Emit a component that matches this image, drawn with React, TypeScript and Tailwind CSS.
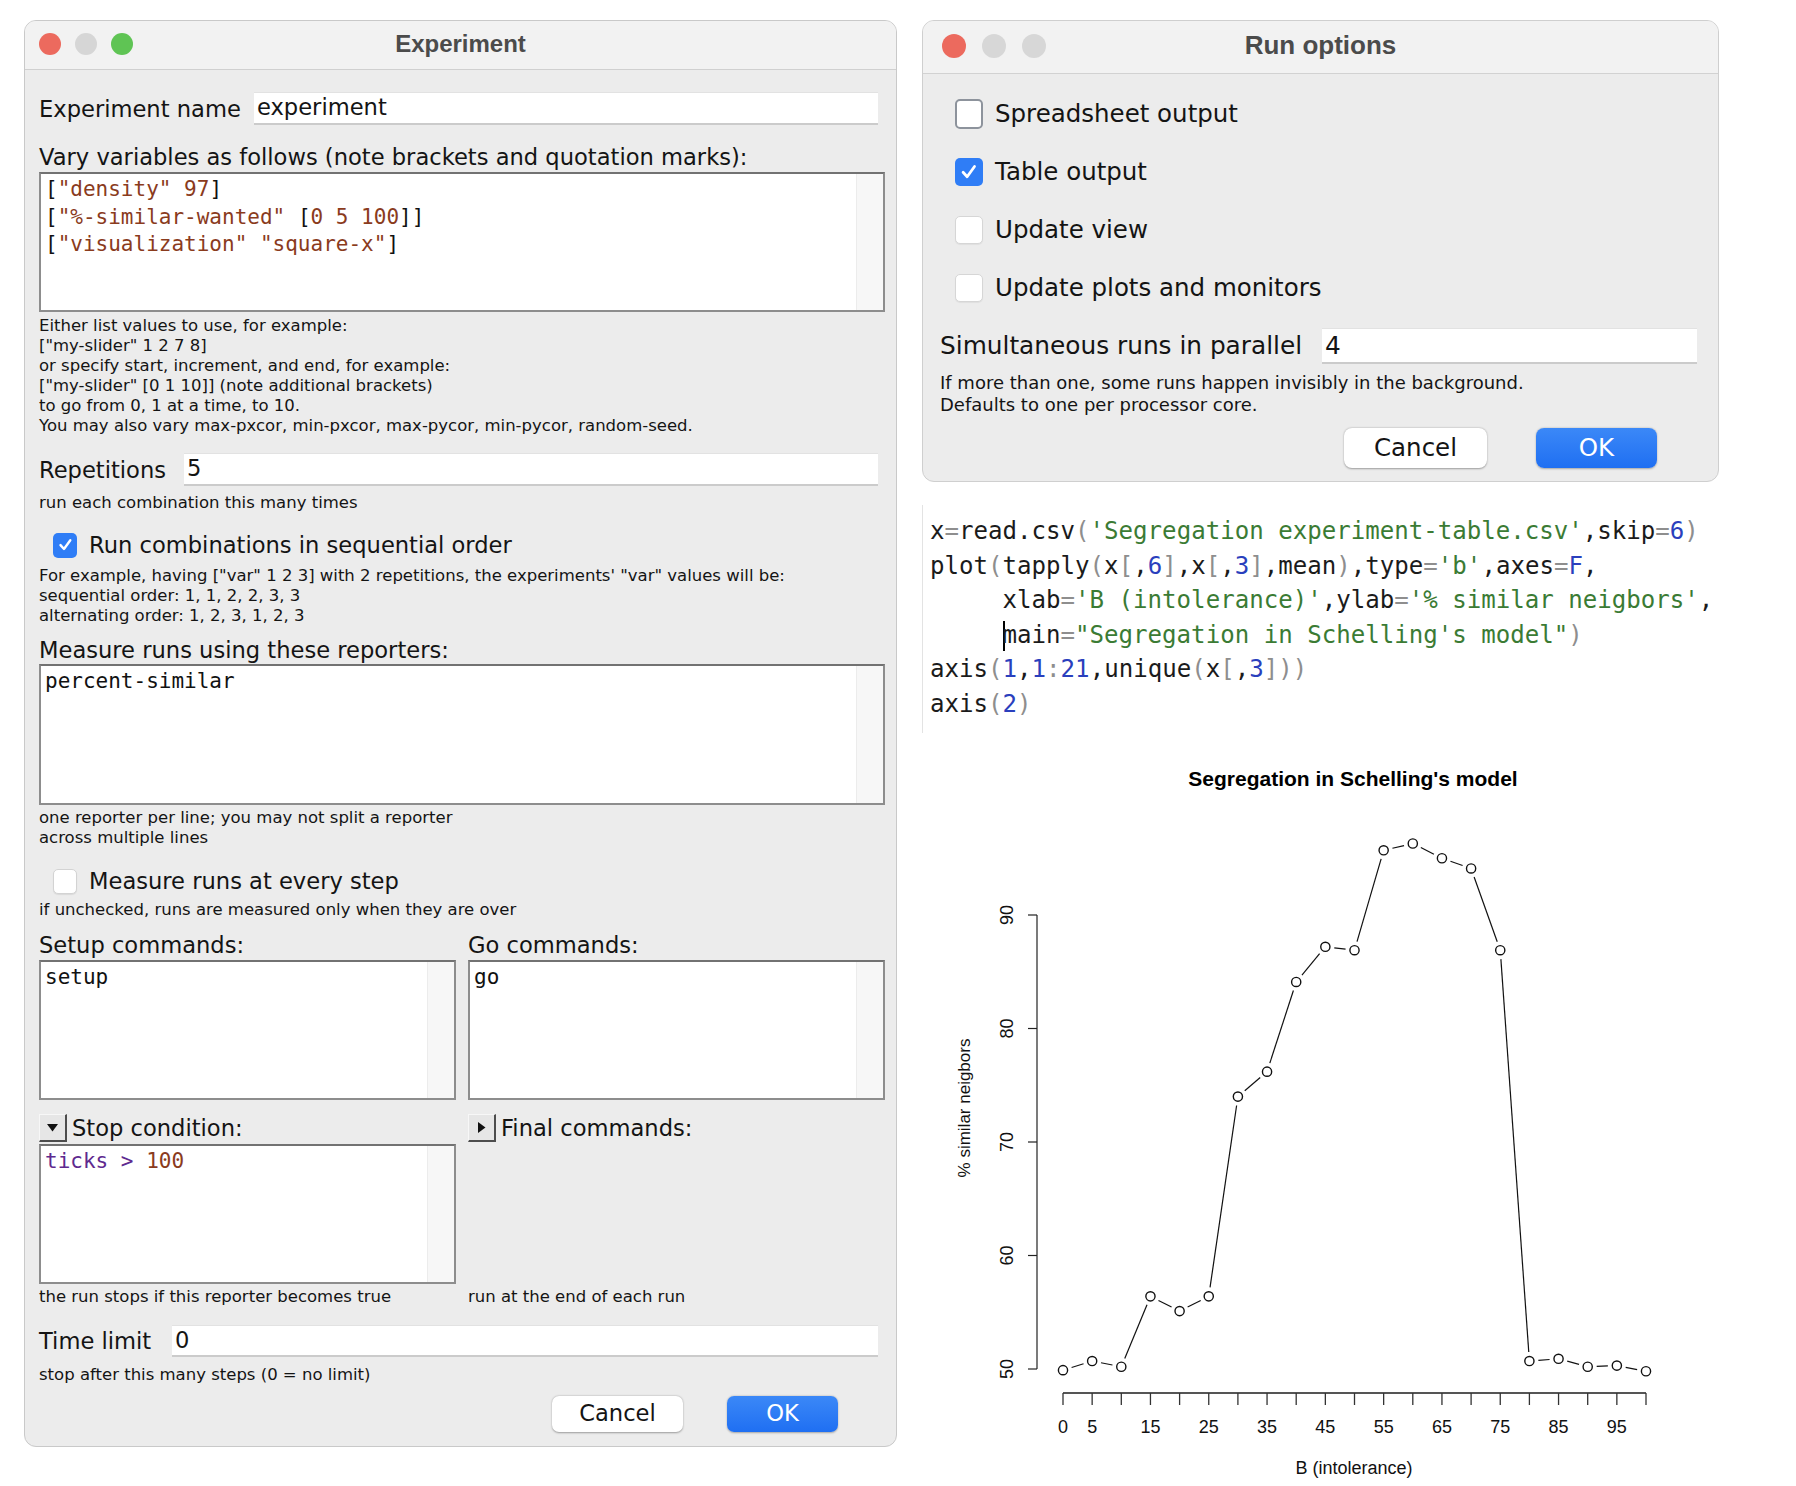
import React from "react";

const SANS = "font-['DejaVu_Sans',sans-serif]";
const MONO = "font-['DejaVu_Sans_Mono',monospace]";
const ARIAL = "font-['Liberation_Sans',Arial,sans-serif]";

function Light({ color, cls }: { color: string; cls: string }) {
  return <div className={"rounded-full " + cls} style={{ backgroundColor: color }} />;
}

function Check({ cls }: { cls: string }) {
  return (
    <div className={"rounded-[5px] bg-[#2f7df6] flex items-center justify-center shrink-0 " + cls}>
      <svg viewBox="0 0 24 24" className="w-[70%] h-[70%]">
        <path d="M5 12.5 L10 18 L19 5.5" fill="none" stroke="white" strokeWidth="3.4" strokeLinecap="round" strokeLinejoin="round" />
      </svg>
    </div>
  );
}

function Uncheck({ cls }: { cls: string }) {
  return <div className={"rounded-[5px] bg-white shrink-0 " + cls} />;
}

function Field({ value, cls, textCls }: { value: string; cls: string; textCls: string }) {
  return (
    <div className={"bg-white border-t border-t-[#e2e2e2] border-b-2 border-b-[#cbcbcb] flex items-center pl-[3px] " + cls}>
      <span className={textCls}>{value}</span>
    </div>
  );
}

function CodeBox({ cls, children }: { cls: string; children?: React.ReactNode }) {
  return (
    <div className={"flex bg-white border-2 border-[#8d8d8d] border-t-[#727272] " + cls}>
      <div className={"flex-1 pl-[4px] pt-[2px] text-[21px] leading-[27.5px] whitespace-pre text-[#111] " + MONO}>{children}</div>
      <div className="w-[27px] bg-[#f7f7f7] border-l border-[#ececec]" />
    </div>
  );
}

function Tri({ dir }: { dir: "down" | "right" }) {
  return (
    <div className="w-[28px] h-[28px] shrink-0 bg-[#e6e6e6] border-t border-l border-[#f7f7f7] border-r-2 border-r-[#4d4d4d] border-b-2 border-b-[#4d4d4d] flex items-center justify-center">
      {dir === "down" ? (
        <svg width="11" height="8" viewBox="0 0 11 8"><path d="M0 0 L11 0 L5.5 7.5 Z" fill="#111" /></svg>
      ) : (
        <svg width="8" height="11" viewBox="0 0 8 11"><path d="M0 0 L7.5 5.5 L0 11 Z" fill="#111" /></svg>
      )}
    </div>
  );
}

const B = "text-[#8a3b1d]";
const K = "text-[#111]";
const LBL = "text-[22.6px] leading-[26px]";
const SM = "text-[16.5px] leading-[20px]";

function ExperimentWindow() {
  return (
    <div className={"w-[873px] h-[1427px] shrink-0 rounded-[12px] bg-[#ececec] border border-[#c9c9c9] overflow-hidden flex flex-col text-[#141414] " + SANS}>
      <div className="h-[49px] shrink-0 pb-[3px] bg-[#f2f2f2] border-b border-[#d0d0d0] grid grid-cols-[1fr_auto_1fr] items-center">
        <div className="flex items-center gap-[14px] pl-[14px]">
          <Light color="#ec6a5e" cls="w-[22px] h-[22px]" />
          <Light color="#d6d6d6" cls="w-[22px] h-[22px]" />
          <Light color="#5fc454" cls="w-[22px] h-[22px]" />
        </div>
        <span className={"text-[24px] font-bold text-[#4b4b4b] " + ARIAL}>Experiment</span>
        <div />
      </div>

      <div className="flex flex-col pl-[14px] pr-[11px]">
        <div className="mt-[22px] flex items-center h-[33px]">
          <span className={"w-[215px] shrink-0 " + LBL}>Experiment name</span>
          <Field value="experiment" cls="flex-1 h-[33px] mr-[7px]" textCls="text-[22.6px]" />
        </div>

        <div className={"mt-[19px] " + LBL}>Vary variables as follows (note brackets and quotation marks):</div>
        <CodeBox cls="mt-[2px] h-[140px]">
          <div>
            <span className={K}>[</span><span className={B}>"density" 97</span><span className={K}>]</span>
          </div>
          <div>
            <span className={K}>[</span><span className={B}>"%-similar-wanted" </span><span className={K}>[</span><span className={B}>0 5 100</span><span className={K}>]]</span>
          </div>
          <div>
            <span className={K}>[</span><span className={B}>"visualization" "square-x"</span><span className={K}>]</span>
          </div>
        </CodeBox>

        <div className={"mt-[4px] " + SM}>
          <div>Either list values to use, for example:</div>
          <div>["my-slider" 1 2 7 8]</div>
          <div>or specify start, increment, and end, for example:</div>
          <div>["my-slider" [0 1 10]] (note additional brackets)</div>
          <div>to go from 0, 1 at a time, to 10.</div>
          <div>You may also vary max-pxcor, min-pxcor, max-pycor, min-pycor, random-seed.</div>
        </div>

        <div className="mt-[17px] flex items-center h-[33px]">
          <span className={"w-[145px] shrink-0 " + LBL}>Repetitions</span>
          <Field value="5" cls="flex-1 h-[33px] mr-[7px]" textCls="text-[22.6px]" />
        </div>
        <div className={"mt-[7px] " + SM}>run each combination this many times</div>

        <div className="mt-[19px] h-[26px] flex items-center gap-[12px] pl-[14px]">
          <Check cls="w-[24px] h-[25px]" />
          <span className={LBL}>Run combinations in sequential order</span>
        </div>
        <div className={"mt-[8px] " + SM}>
          <div>For example, having ["var" 1 2 3] with 2 repetitions, the experiments' "var" values will be:</div>
          <div>sequential order: 1, 1, 2, 2, 3, 3</div>
          <div>alternating order: 1, 2, 3, 1, 2, 3</div>
        </div>

        <div className={"mt-[11px] " + LBL}>Measure runs using these reporters:</div>
        <CodeBox cls="mt-[1px] h-[141px]">
          <div className={K}>percent-similar</div>
        </CodeBox>
        <div className={"mt-[3px] " + SM}>
          <div>one reporter per line; you may not split a reporter</div>
          <div>across multiple lines</div>
        </div>

        <div className="mt-[20px] h-[26px] flex items-center gap-[12px] pl-[14px]">
          <Uncheck cls="w-[24px] h-[25px] border border-[#d3d3d3] shadow-[0_1px_1px_rgba(0,0,0,0.08)]" />
          <span className={LBL}>Measure runs at every step</span>
        </div>
        <div className={"mt-[6px] " + SM}>if unchecked, runs are measured only when they are over</div>

        <div className="mt-[12px] grid grid-cols-2 gap-x-[12px]">
          <div className={LBL}>Setup commands:</div>
          <div className={LBL}>Go commands:</div>
          <CodeBox cls="mt-[2px] h-[140px]">
            <div className={K}>setup</div>
          </CodeBox>
          <CodeBox cls="mt-[2px] h-[140px]">
            <div className={K}>go</div>
          </CodeBox>

          <div className="mt-[14px] h-[28px] flex items-center gap-[5px]">
            <Tri dir="down" />
            <span className={LBL}>Stop condition:</span>
          </div>
          <div className="mt-[14px] h-[28px] flex items-center gap-[5px]">
            <Tri dir="right" />
            <span className={LBL}>Final commands:</span>
          </div>
          <CodeBox cls="mt-[2px] h-[140px]">
            <div>
              <span className="text-[#5e2a8f]">ticks &gt; </span><span className={B}>100</span>
            </div>
          </CodeBox>
          <div />

          <div className={"mt-[3px] " + SM}>the run stops if this reporter becomes true</div>
          <div className={"mt-[3px] " + SM}>run at the end of each run</div>
        </div>

        <div className="mt-[18px] flex items-center h-[32px]">
          <span className={"w-[133px] shrink-0 " + LBL}>Time limit</span>
          <Field value="0" cls="flex-1 h-[32px] mr-[7px]" textCls="text-[22.6px]" />
        </div>
        <div className={"mt-[8px] " + SM}>stop after this many steps (0 = no limit)</div>

        <div className="mt-[11px] flex justify-end gap-[44px] pr-[47px]">
          <div className="w-[131px] h-[36px] rounded-[7px] bg-white shadow-[0_0.5px_2px_rgba(0,0,0,0.35)] flex items-center justify-center text-[22.6px]">Cancel</div>
          <div className="w-[111px] h-[36px] rounded-[7px] bg-gradient-to-b from-[#3b88f7] to-[#1f6ff2] shadow-[0_0.5px_2px_rgba(0,0,0,0.3)] flex items-center justify-center text-[22.6px] text-white">OK</div>
        </div>
      </div>
    </div>
  );
}

function RunOptions() {
  return (
    <div className={"w-[797px] h-[462px] shrink-0 rounded-[12px] bg-[#ececec] border border-[#cfcfcf] overflow-hidden flex flex-col text-[#141414] " + SANS}>
      <div className="h-[53px] shrink-0 pb-[3px] bg-[#f2f2f2] border-b border-[#d2d2d2] grid grid-cols-[1fr_auto_1fr] items-center">
        <div className="flex items-center gap-[16px] pl-[19px]">
          <Light color="#ec6a5e" cls="w-[24px] h-[24px]" />
          <Light color="#d7d7d7" cls="w-[24px] h-[24px]" />
          <Light color="#d7d7d7" cls="w-[24px] h-[24px]" />
        </div>
        <span className={"text-[26px] font-bold text-[#4b4b4b] " + ARIAL}>Run options</span>
        <div />
      </div>
      <div className="flex flex-col pl-[17px] pr-[21px]">
        <div className="mt-[25px] h-[30px] flex items-center gap-[12px] pl-[15px]">
          <Uncheck cls="w-[28px] h-[30px] border-[2.5px] border-[#8d939c]" />
          <span className="text-[24.5px] leading-[30px]">Spreadsheet output</span>
        </div>
        <div className="mt-[28px] h-[30px] flex items-center gap-[12px] pl-[15px]">
          <Check cls="w-[28px] h-[28px]" />
          <span className="text-[24.5px] leading-[30px]">Table output</span>
        </div>
        <div className="mt-[28px] h-[30px] flex items-center gap-[12px] pl-[15px]">
          <Uncheck cls="w-[28px] h-[28px] border border-[#d6d6d6] shadow-[0_1px_1px_rgba(0,0,0,0.06)]" />
          <span className="text-[24.5px] leading-[30px]">Update view</span>
        </div>
        <div className="mt-[28px] h-[30px] flex items-center gap-[12px] pl-[15px]">
          <Uncheck cls="w-[28px] h-[28px] border border-[#d6d6d6] shadow-[0_1px_1px_rgba(0,0,0,0.06)]" />
          <span className="text-[24.5px] leading-[30px]">Update plots and monitors</span>
        </div>

        <div className="mt-[25px] h-[36px] flex items-center">
          <span className="w-[382px] shrink-0 text-[24.8px] leading-[30px]">Simultaneous runs in parallel</span>
          <Field value="4" cls="flex-1 h-[36px]" textCls="text-[24.8px]" />
        </div>
        <div className="mt-[8px] text-[18px] leading-[22px]">
          <div>If more than one, some runs happen invisibly in the background.</div>
          <div>Defaults to one per processor core.</div>
        </div>
        <div className="mt-[12px] flex justify-end gap-[49px] pr-[40px]">
          <div className="w-[143px] h-[40px] rounded-[8px] bg-white shadow-[0_0.5px_2px_rgba(0,0,0,0.35)] flex items-center justify-center text-[24.5px]">Cancel</div>
          <div className="w-[121px] h-[40px] rounded-[8px] bg-gradient-to-b from-[#3b88f7] to-[#1f6ff2] shadow-[0_0.5px_2px_rgba(0,0,0,0.3)] flex items-center justify-center text-[24.5px] text-white">OK</div>
        </div>
      </div>
    </div>
  );
}

type Seg = [string, string];
const k = "#1b1b1b";
const g = "#8e8e8e";
const s = "#3b7b34";
const n = "#2a3fbd";

const codeLines: Seg[][] = [
  [["x", k], ["=", g], ["read.csv", k], ["(", g], ["'Segregation experiment-table.csv'", s], [",skip", k], ["=", g], ["6", n], [")", g]],
  [["plot", k], ["(", g], ["tapply", k], ["(", g], ["x", k], ["[", g], [",", k], ["6", n], ["]", g], [",x", k], ["[", g], [",", k], ["3", n], ["]", g], [",mean", k], [")", g], [",type", k], ["=", g], ["'b'", s], [",axes", k], ["=", g], ["F", n], [",", k]],
  [["     xlab", k], ["=", g], ["'B (intolerance)'", s], [",ylab", k], ["=", g], ["'% similar neigbors'", s], [",", k]],
  [["     ", k], ["|", "cursor"], ["main", k], ["=", g], ["\"Segregation in Schelling's model\"", s], [")", g]],
  [["axis", k], ["(", g], ["1", n], [",", k], ["1", n], [":", g], ["21", n], [",unique", k], ["(", g], ["x", k], ["[", g], [",", k], ["3", n], ["]", g], [")", g], [")", g]],
  [["axis", k], ["(", g], ["2", n], [")", g]],
];

function RCode() {
  return (
    <div className={"mt-[23px] h-[228px] border-l border-[#e3e3e3] pl-[7px] pt-[9px] text-[24.1px] leading-[34.6px] whitespace-pre " + MONO}>
      {codeLines.map((line, i) => (
        <div key={i}>
          {line.map(([t, c], j) =>
            c === "cursor" ? (
              <span key={j} className="inline-block w-[2px] h-[30px] -mr-[2px] bg-black align-middle" />
            ) : (
              <span key={j} style={{ color: c }}>{t}</span>
            )
          )}
        </div>
      ))}
    </div>
  );
}

function Chart() {
  const vals = [49.9, 50.7, 50.2, 56.4, 55.1, 56.4, 74.0, 76.2, 84.1, 87.2, 86.9, 95.7, 96.3, 95.0, 94.1, 86.9, 50.7, 50.9, 50.2, 50.3, 49.8];
  const X0 = 141;
  const DX = 29.15;
  const Y50 = 624;
  const PU = 11.35;
  const pts = vals.map((v, i) => [X0 + i * DX, Y50 - (v - 50) * PU]);
  const gap = 9;
  const segs: number[][] = [];
  for (let i = 0; i < pts.length - 1; i++) {
    const [x1, y1] = pts[i];
    const [x2, y2] = pts[i + 1];
    const d = Math.hypot(x2 - x1, y2 - y1);
    if (d <= gap * 2 + 1) continue;
    const ux = (x2 - x1) / d;
    const uy = (y2 - y1) / d;
    segs.push([x1 + ux * gap, y1 + uy * gap, x2 - ux * gap, y2 - uy * gap]);
  }
  const yt = [50, 60, 70, 80, 90];
  const xl = [0, 1, 3, 5, 7, 9, 11, 13, 15, 17, 19];
  return (
    <div className="mt-[12px]">
      <svg width="797" height="741" viewBox="0 0 797 741" className={ARIAL}>
        <text x="431" y="41" textAnchor="middle" fontSize="21" fontWeight="bold" fill="#000">Segregation in Schelling's model</text>
        <line x1="115" y1="170" x2="115" y2="624" stroke="#222" strokeWidth="1.2" />
        {yt.map((v) => {
          const y = Y50 - (v - 50) * PU;
          return (
            <g key={v}>
              <line x1="106" y1={y} x2="115" y2={y} stroke="#222" strokeWidth="1.2" />
              <text x="85" y={y} transform={`rotate(-90 85 ${y})`} textAnchor="middle" dominantBaseline="central" fontSize="18" fill="#111">{v}</text>
            </g>
          );
        })}
        <text x="42" y="363" transform="rotate(-90 42 363)" textAnchor="middle" dominantBaseline="central" fontSize="17" fill="#111">% similar neigbors</text>
        <line x1={X0} y1="648" x2={X0 + 20 * DX} y2="648" stroke="#555" strokeWidth="2.2" />
        {vals.map((_, i) => (
          <line key={i} x1={X0 + i * DX} y1="648" x2={X0 + i * DX} y2="660" stroke="#333" strokeWidth="1.3" />
        ))}
        {xl.map((i) => (
          <text key={i} x={X0 + i * DX} y="688" textAnchor="middle" fontSize="18" fill="#111">{i * 5}</text>
        ))}
        <text x="432" y="729" textAnchor="middle" fontSize="18" fill="#111">B (intolerance)</text>
        {segs.map((sg, i) => (
          <line key={i} x1={sg[0]} y1={sg[1]} x2={sg[2]} y2={sg[3]} stroke="#111" strokeWidth="1.2" />
        ))}
        {pts.map(([x, y], i) => (
          <circle key={i} cx={x} cy={y} r="4.6" fill="none" stroke="#111" strokeWidth="1.4" />
        ))}
      </svg>
    </div>
  );
}

export default function App() {
  return (
    <div className="w-[1796px] h-[1486px] bg-white flex items-start gap-[25px] pl-[24px] pt-[20px] overflow-hidden">
      <ExperimentWindow />
      <div className="w-[797px] flex flex-col shrink-0">
        <RunOptions />
        <RCode />
        <Chart />
      </div>
    </div>
  );
}
